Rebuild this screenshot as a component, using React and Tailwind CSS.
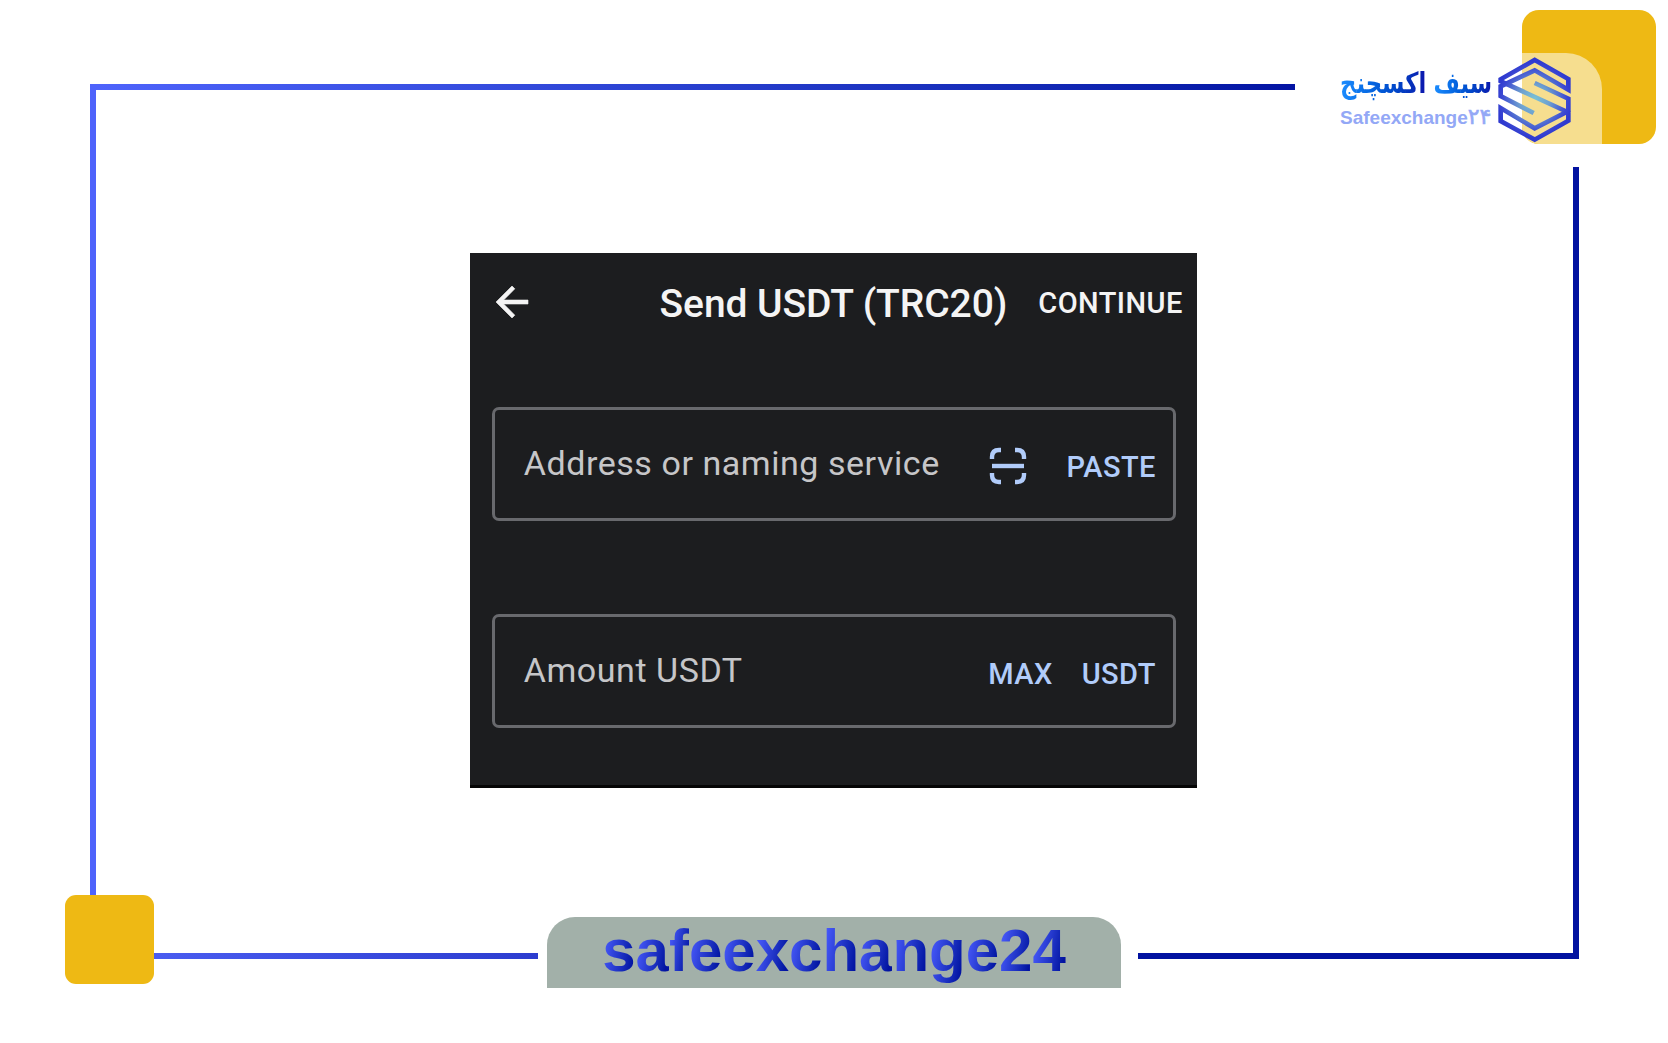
const FOOTER_LETTERS = "safeexchange24".split("");

const FIELDS = [
  { label: "Address or naming service", scan: true, actions: ["PASTE"] },
  { label: "Amount USDT", scan: false, actions: ["MAX", "USDT"] },
];

const ArrowBack = () => (
  <svg viewBox="0 0 24 24" className="size-12 fill-[#f4f4f4] stroke-[#f4f4f4]" strokeWidth="0.3" strokeLinejoin="round">
    <path d="M20 11H7.83l5.59-5.59L12 4l-8 8 8 8 1.41-1.41L7.83 13H20v-2z" />
  </svg>
);

const ScanIcon = () => (
  <svg viewBox="0 0 38 38" className="size-[38px] shrink-0" fill="none" stroke="#b1ccfa" strokeWidth="4.4">
    <path d="M3 12V10Q3 3 10 3H12M26 3H28Q35 3 35 10V12M35 26V28Q35 35 28 35H26M12 35H10Q3 35 3 28V26" />
    <path d="M3 19H35" />
  </svg>
);

const LogoMark = () => (
  <svg viewBox="0 0 330 330" className="size-[110px]" fill="none" stroke="url(#mark)" strokeWidth="14">
    <defs>
      <radialGradient id="mark" gradientUnits="userSpaceOnUse" cx="163" cy="164" r="115">
        <stop offset="0" stopColor="#7cc4d4" />
        <stop offset="0.4" stopColor="#6d9fd0" />
        <stop offset="0.85" stopColor="#3b48d2" />
        <stop offset="1" stopColor="#2f3ad0" />
      </radialGradient>
    </defs>
    <path d="M62 112V103L164 45L265 102V134L164 76L62 124V153L161 204" />
    <path d="M265 198V227L164 284L62 228V189L164 250L265 198V161L164 114" />
    <path d="M58 107L269 204" />
  </svg>
);

const Brand = () => (
  <div className="mt-[62px] ml-[45px] w-[152px] shrink-0 whitespace-nowrap">
    <div
      dir="rtl"
      className="flex h-[42px] w-[174px] origin-left scale-x-[0.875] scale-y-[1.12] justify-between font-['DejaVu_Sans',sans-serif] text-[26px] leading-[42px] font-bold"
    >
      <span className="bg-linear-to-l from-[#0d12ac] to-[#1c8dff] bg-clip-text text-transparent">سیف</span>
      <span className="bg-linear-to-l from-[#0d12ac] to-[#1c8dff] bg-clip-text text-transparent">اکسچنج</span>
    </div>
    <div className="h-[26px] font-['Liberation_Sans','DejaVu_Sans',sans-serif] text-[19px] leading-[27px] font-bold text-[#93a8f6]">
      Safeexchange<span className="text-[22px] leading-none font-normal [-webkit-text-stroke:0.6px_#93a8f6]">۲۴</span>
    </div>
  </div>
);

const Field = ({ label, scan, actions }) => (
  <div className="flex h-[114px] items-center rounded-[7px] border-[3.5px] border-[#68696d] pr-[17px] pl-[29px]">
    <span className="-mt-0.5 text-[34px] tracking-[0.55px] text-[#c6c6c8]">{label}</span>
    <div className="mt-1 ml-auto flex items-center text-[29px] font-medium tracking-[0.4px] text-[#b1ccfa]">
      {scan && <ScanIcon />}
      {actions.map((action, i) => (
        <span key={action} className={scan ? "mt-[3px] ml-10" : i > 0 ? "mt-[3px] ml-[29px]" : "mt-[3px]"}>
          {action}
        </span>
      ))}
    </div>
  </div>
);

const SendCard = () => (
  <div className="mt-[86px] mr-[2px] h-[535px] w-[727px] border-b-[3px] border-[#050505] bg-[#1c1d1f] font-['Roboto',sans-serif] whitespace-nowrap">
    <div className="flex h-[98px] items-center pr-3.5 pl-[18px]">
      <ArrowBack />
      <span className="mt-1 ml-auto text-[39px] font-medium tracking-[-0.1px] text-[#f4f4f4]">Send USDT (TRC20)</span>
      <span className="mt-1 ml-[31px] text-[29px] font-medium tracking-[0.45px] text-[#f4f4f4]">CONTINUE</span>
    </div>
    <div className="mt-14 ml-[22px] flex w-[684px] flex-col gap-[93px]">
      {FIELDS.map((field) => (
        <Field key={field.label} {...field} />
      ))}
    </div>
  </div>
);

export default function App() {
  return (
    <div className="flex h-[1043px] w-[1668px] flex-col overflow-hidden bg-white">
      {/* top edge, brand and corner block */}
      <div className="flex h-[167px] items-start">
        <div className="mt-[83.5px] ml-[89.5px] h-[83.5px] w-[1205.5px] shrink-0 border-l-[6px] border-[#4e63fb]">
          <div className="h-1.5 bg-linear-to-r from-[#4e63fb] to-[#0414a3]" />
        </div>
        <Brand />
        <div className="relative mt-2.5 ml-[30px] size-[134px] shrink-0 rounded-[17px] bg-[#eeb914]">
          <div className="flex h-full items-end overflow-hidden rounded-[17px]">
            <div className="h-[91px] w-20 rounded-tr-[36px] bg-[#f6de8f]" />
          </div>
          <div className="absolute top-[35px] -left-[42px]">
            <LogoMark />
          </div>
        </div>
      </div>

      {/* sides */}
      <div className="flex h-[728px] justify-between pr-[89px] pl-[89.5px]">
        <div className="w-1.5 bg-[#4e63fb]" />
        <SendCard />
        <div className="w-1.5 bg-[#0212a0]" />
      </div>

      {/* bottom edge and name tab */}
      <div className="flex items-start">
        <div className="ml-[65px] size-[89px] shrink-0 rounded-[11px] bg-[#eeb914]" />
        <div className="mt-[58px] h-1.5 w-96 bg-linear-to-r from-[#4a5cf0] to-[#2c3ccf]" />
        <div className="mt-[22px] ml-[9px] flex h-[71px] w-[574px] justify-center rounded-t-[28px] bg-[#a2b0a9] font-['Liberation_Sans',sans-serif] text-[60px] leading-[68px] font-bold">
          {FOOTER_LETTERS.map((letter, i) => (
            <span key={i} className="bg-linear-100 from-[#4b5cff] from-10% to-[#0212a0] to-85% bg-clip-text text-transparent">
              {letter}
            </span>
          ))}
        </div>
        <div className="ml-[17px] flex h-16 w-[441px] flex-col justify-end border-r-[6px] border-[#0212a0]">
          <div className="h-1.5 bg-[#0212a0]" />
        </div>
      </div>
    </div>
  );
}
